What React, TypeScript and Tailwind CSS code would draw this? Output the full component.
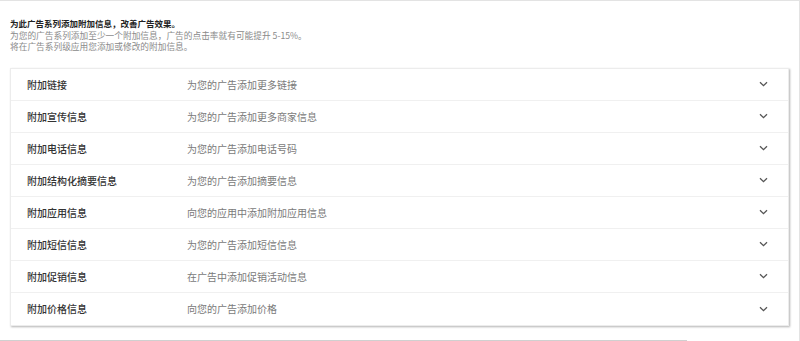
const rows = [
  { title: '附加链接', desc: '为您的广告添加更多链接' },
  { title: '附加宣传信息', desc: '为您的广告添加更多商家信息' },
  { title: '附加电话信息', desc: '为您的广告添加电话号码' },
  { title: '附加结构化摘要信息', desc: '为您的广告添加摘要信息' },
  { title: '附加应用信息', desc: '向您的应用中添加附加应用信息' },
  { title: '附加短信信息', desc: '为您的广告添加短信信息' },
  { title: '附加促销信息', desc: '在广告中添加促销活动信息' },
  { title: '附加价格信息', desc: '向您的广告添加价格' },
]

function Chevron() {
  return (
    <svg width="9" height="6" viewBox="0 0 9 6" className="text-[#555]">
      <path d="M1 1.2l3.5 3.5 3.5-3.5" fill="none" stroke="currentColor" strokeWidth="1.3" />
    </svg>
  )
}

export default function App() {
  return (
    <div className="h-[341px] w-[800px] overflow-hidden border-t border-r border-[#e3e3e3] bg-white font-['Noto_Sans_CJK_SC',sans-serif]">
      <div className="pt-[17px] pl-[10px]">
        <div className="text-[8.7px] leading-[11.5px]">
          <div className="text-[8.5px] font-bold text-[#222]">为此广告系列添加附加信息，改善广告效果。</div>
          <div className="text-[#8a8a8a]">为您的广告系列添加至少一个附加信息，广告的点击率就有可能提升 5-15%。</div>
          <div className="text-[#8a8a8a]">将在广告系列级应用您添加或修改的附加信息。</div>
        </div>

        <div className="mt-[15px] w-[779px] border border-[#ececec] bg-white shadow-[1px_1px_2px_rgba(0,0,0,0.3)]">
          {rows.map((r, i) => (
            <div
              key={r.title}
              className={`flex h-[32px] items-center pl-[16px] pr-[20px] ${i < rows.length - 1 ? 'border-b border-[#f0f0f0]' : ''}`}
            >
              <div className="w-[160px] text-[10px] font-medium text-[#333]">{r.title}</div>
              <div className="flex-1 text-[10px] text-[#7a7a7a]">{r.desc}</div>
              <Chevron />
            </div>
          ))}
        </div>
      </div>
      <div className="mt-[14px] h-[2px] w-[687px] bg-[#d0d0d0]" />
    </div>
  )
}
